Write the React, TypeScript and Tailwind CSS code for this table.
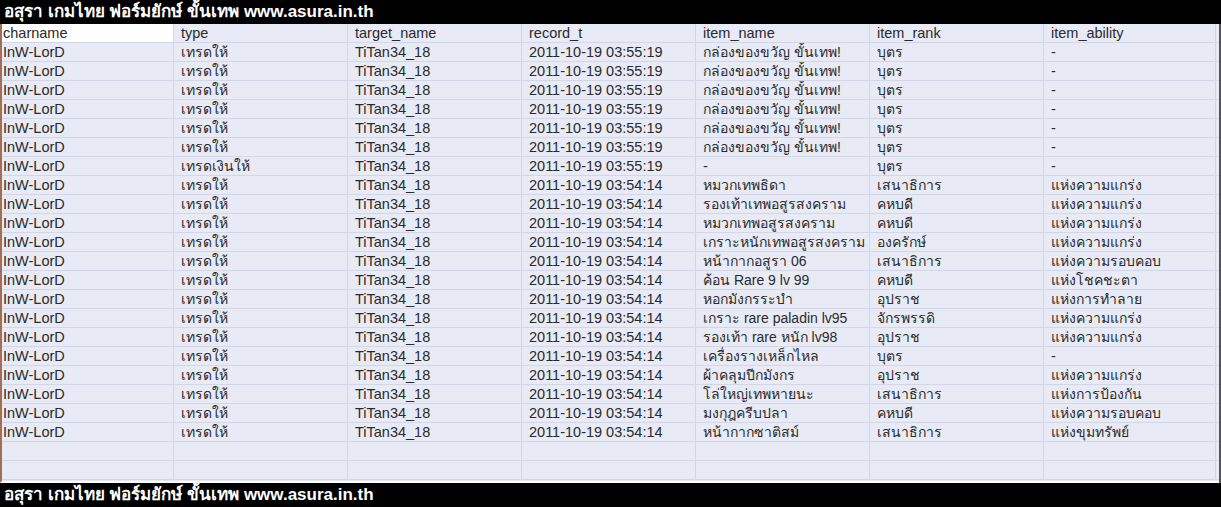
const cols = ["charname", "type", "target_name", "record_t", "item_name", "item_rank", "item_ability"];

const gifts = Array.from({ length: 6 }, () => ["เทรดให้", "03:55:19", "กล่องของขวัญ ขั้นเทพ!", "บุตร", "-"]);

const items: string[][] = [
  ...gifts,
  ["เทรดเงินให้", "03:55:19", "-", "บุตร", "-"],
  ["เทรดให้", "03:54:14", "หมวกเทพธิดา", "เสนาธิการ", "แห่งความแกร่ง"],
  ["เทรดให้", "03:54:14", "รองเท้าเทพอสูรสงคราม", "คหบดี", "แห่งความแกร่ง"],
  ["เทรดให้", "03:54:14", "หมวกเทพอสูรสงคราม", "คหบดี", "แห่งความแกร่ง"],
  ["เทรดให้", "03:54:14", "เกราะหนักเทพอสูรสงคราม", "องครักษ์", "แห่งความแกร่ง"],
  ["เทรดให้", "03:54:14", "หน้ากากอสูรา 06", "เสนาธิการ", "แห่งความรอบคอบ"],
  ["เทรดให้", "03:54:14", "ค้อน Rare 9 lv 99", "คหบดี", "แห่งโชคชะตา"],
  ["เทรดให้", "03:54:14", "หอกมังกรระบำ", "อุปราช", "แห่งการทำลาย"],
  ["เทรดให้", "03:54:14", "เกราะ rare paladin lv95", "จักรพรรดิ", "แห่งความแกร่ง"],
  ["เทรดให้", "03:54:14", "รองเท้า rare หนัก lv98", "อุปราช", "แห่งความแกร่ง"],
  ["เทรดให้", "03:54:14", "เครื่องรางเหล็กไหล", "บุตร", "-"],
  ["เทรดให้", "03:54:14", "ผ้าคลุมปีกมังกร", "อุปราช", "แห่งความแกร่ง"],
  ["เทรดให้", "03:54:14", "โล่ใหญ่เทพหายนะ", "เสนาธิการ", "แห่งการป้องกัน"],
  ["เทรดให้", "03:54:14", "มงกุฎครีบปลา", "คหบดี", "แห่งความรอบคอบ"],
  ["เทรดให้", "03:54:14", "หน้ากากซาติสม์", "เสนาธิการ", "แห่งขุมทรัพย์"],
];

const rows: string[][] = items.map(([type, time, name, rank, ability]) => [
  "InW-LorD",
  type,
  "TiTan34_18",
  "2011-10-19 " + time,
  name,
  rank,
  ability,
]);

const blank = ["", "", "", "", "", "", ""];

// thai glyphs come out wider than latin in the fallback font
const isThai = (s: string) => /[\u0E00-\u0E7F]/.test(s);

function Banner() {
  return (
    <div className="h-6 bg-black text-white font-bold text-[17px] leading-6 pl-[4px] whitespace-nowrap">
      อสุรา เกมไทย ฟอร์มยักษ์ ขั้นเทพ www.asura.in.th
    </div>
  );
}

function Row({ cells, header }: { cells: string[]; header?: boolean }) {
  return (
    <div className="grid grid-cols-[172px_174px_174px_174px_174px_174px_172px] h-[19px] border-b border-[#d3d6e6]">
      {cells.map((c, i) => (
        <div
          key={i}
          className={
            "leading-[19px] whitespace-nowrap overflow-hidden border-r border-[#d3d6e6] " +
            (i === 0 ? "pl-[1px] " : "pl-[7px] ") +
            (isThai(c) ? "text-[14px] " : "") +
            (header && i === 0 ? "bg-white" : "")
          }
        >
          {c}
        </div>
      ))}
    </div>
  );
}

export default function App() {
  return (
    <div className="w-[1221px] h-[507px] bg-black overflow-hidden" style={{ fontFamily: '"Liberation Sans", "Noto Sans", sans-serif' }}>
      <Banner />
      <div className="flex h-[459px]">
        <div className="w-[1219px] border-l-2 border-[#a07050] border-b-2 border-b-white bg-[#e8eaf6] text-[14.5px] text-[#2a2a2a]">
          <Row cells={cols} header />
          {rows.map((r, i) => (
            <Row key={i} cells={r} />
          ))}
          <Row cells={blank} />
          <Row cells={blank} />
        </div>
        <div className="w-[2px] bg-[#555]" />
      </div>
      <Banner />
    </div>
  );
}
